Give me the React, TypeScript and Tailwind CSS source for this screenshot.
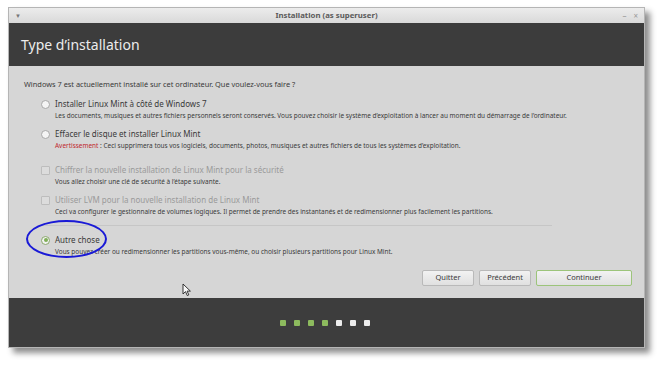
import React from "react";

const font = { fontFamily: '"Noto Sans", "Open Sans", sans-serif' };

function Radio({ checked = false }: { checked?: boolean }) {
  return (
    <span
      className={
        "flex h-[9px] w-[9px] shrink-0 items-center justify-center rounded-full border " +
        (checked ? "border-[#8aa86c] bg-[#f2f2f2]" : "border-[#a8a8a8] bg-[#f4f4f4]")
      }
    >
      {checked && <span className="h-[4px] w-[4px] rounded-full bg-[#7fae57]" />}
    </span>
  );
}

function Check() {
  return <span className="h-[9px] w-[9px] shrink-0 rounded-[1px] border border-[#bdbdbd] bg-[#dcdcdc]" />;
}

function Option({
  control,
  label,
  desc,
  disabled = false,
  warn = false,
}: {
  control: React.ReactNode;
  label: string;
  desc: string;
  disabled?: boolean;
  warn?: boolean;
}) {
  return (
    <div className="flex flex-col">
      <div className="flex items-center gap-[5px]">
        {control}
        <span className={"text-[8px] leading-[10px] " + (disabled ? "text-[#9a9a9a]" : "text-[#3a3a3a]")}>{label}</span>
      </div>
      <p className="ml-[14px] mt-[3px] text-[6.45px] leading-[8px] text-[#3a3a3a]">
        {warn && <span className="text-[#c0272d]">Avertissement</span>}
        {desc}
      </p>
    </div>
  );
}

export default function App() {
  return (
    <div className="h-[366px] w-[664px] overflow-hidden bg-white" style={font}>
      <div className="ml-[8px] mt-[7px] flex h-[341px] w-[637px] flex-col border border-[#b5b5b5] shadow-[5px_5px_6px_rgba(0,0,0,0.45)]">
        {/* title bar */}
        <div className="flex h-[15px] items-center bg-gradient-to-b from-[#ececec] to-[#d9d9d9] px-[6px] text-[#777]">
          <span className="w-[40px] text-[6px] leading-none">▼</span>
          <span className="flex-1 text-center text-[7.8px] font-bold text-[#5a5a5a]">Installation (as superuser)</span>
          <span className="flex w-[40px] justify-end gap-[7px] text-[8px] leading-none text-[#9a9a9a]">
            <span>–</span>
            <span>×</span>
          </span>
        </div>

        {/* header */}
        <div className="flex h-[43px] items-center bg-[#3c3c3c] pl-[12px]">
          <h1 className="text-[14px] text-[#ececec]">Type d’installation</h1>
        </div>

        {/* content */}
        <div className="flex flex-1 flex-col bg-[#d6d6d6] pl-[15px] pr-[12px] pt-[13px]">
          <p className="text-[7.4px] leading-[10px] text-[#3a3a3a]">
            Windows 7 est actuellement installé sur cet ordinateur. Que voulez-vous faire ?
          </p>
          <div className="ml-[17px] mt-[10px] flex flex-col gap-[9px]">
            <Option
              control={<Radio />}
              label="Installer Linux Mint à côté de Windows 7"
              desc="Les documents, musiques et autres fichiers personnels seront conservés. Vous pouvez choisir le système d’exploitation à lancer au moment du démarrage de l’ordinateur."
            />
            <Option
              control={<Radio />}
              label="Effacer le disque et installer Linux Mint"
              warn
              desc=" : Ceci supprimera tous vos logiciels, documents, photos, musiques et autres fichiers de tous les systèmes d’exploitation."
            />
            <div className="mt-[6px]">
              <Option
                control={<Check />}
                disabled
                label="Chiffrer la nouvelle installation de Linux Mint pour la sécurité"
                desc="Vous allez choisir une clé de sécurité à l’étape suivante."
              />
            </div>
            <Option
              control={<Check />}
              disabled
              label="Utiliser LVM pour la nouvelle installation de Linux Mint"
              desc="Ceci va configurer le gestionnaire de volumes logiques. Il permet de prendre des instantanés et de redimensionner plus facilement les partitions."
            />
            <div className="mr-[80px] h-px bg-[#c6c6c6]" />
            <div className="relative">
              <Option
                control={<Radio checked />}
                label="Autre chose"
                desc="Vous pouvez créer ou redimensionner les partitions vous-même, ou choisir plusieurs partitions pour Linux Mint."
              />
              <span className="absolute left-[-15px] top-[-15px] h-[38px] w-[81px] rounded-[50%] border-2 border-[#1a1ad6]" />
            </div>
          </div>

          <div className="relative mt-[14px] flex justify-end gap-[5px]">
            <button className="h-[16px] w-[52px] rounded-[2px] border border-[#b9b9b9] bg-gradient-to-b from-[#f2f2f2] to-[#e0e0e0] text-[7.5px] text-[#3a3a3a]">
              Quitter
            </button>
            <button className="h-[16px] w-[52px] rounded-[2px] border border-[#b9b9b9] bg-gradient-to-b from-[#f2f2f2] to-[#e0e0e0] text-[7.5px] text-[#3a3a3a]">
              Précédent
            </button>
            <button className="h-[16px] w-[96px] rounded-[2px] border border-[#9cc47a] bg-gradient-to-b from-[#f2f2f2] to-[#e0e0e0] text-[7.5px] text-[#3a3a3a]">
              Continuer
            </button>
            <svg className="absolute left-[158px] top-[13px]" width="10" height="14" viewBox="0 0 10 14">
              <path d="M1 1 L1 11 L3.5 8.6 L5.3 12.6 L6.8 11.9 L5.1 8.1 L8.4 8.1 Z" fill="#fafafa" stroke="#222" strokeWidth="0.9" strokeLinejoin="round" />
            </svg>
          </div>
        </div>

        {/* footer */}
        <div className="flex h-[49px] items-center justify-center gap-[8px] bg-[#3d3d3d] pr-[4px]">
          {[0, 1, 2, 3].map((i) => (
            <span key={i} className="h-[6px] w-[6px] rounded-[1px] bg-[#8dbb5e]" />
          ))}
          {[0, 1, 2].map((i) => (
            <span key={i} className="h-[6px] w-[6px] rounded-[1px] bg-[#ececec]" />
          ))}
        </div>
      </div>
    </div>
  );
}
